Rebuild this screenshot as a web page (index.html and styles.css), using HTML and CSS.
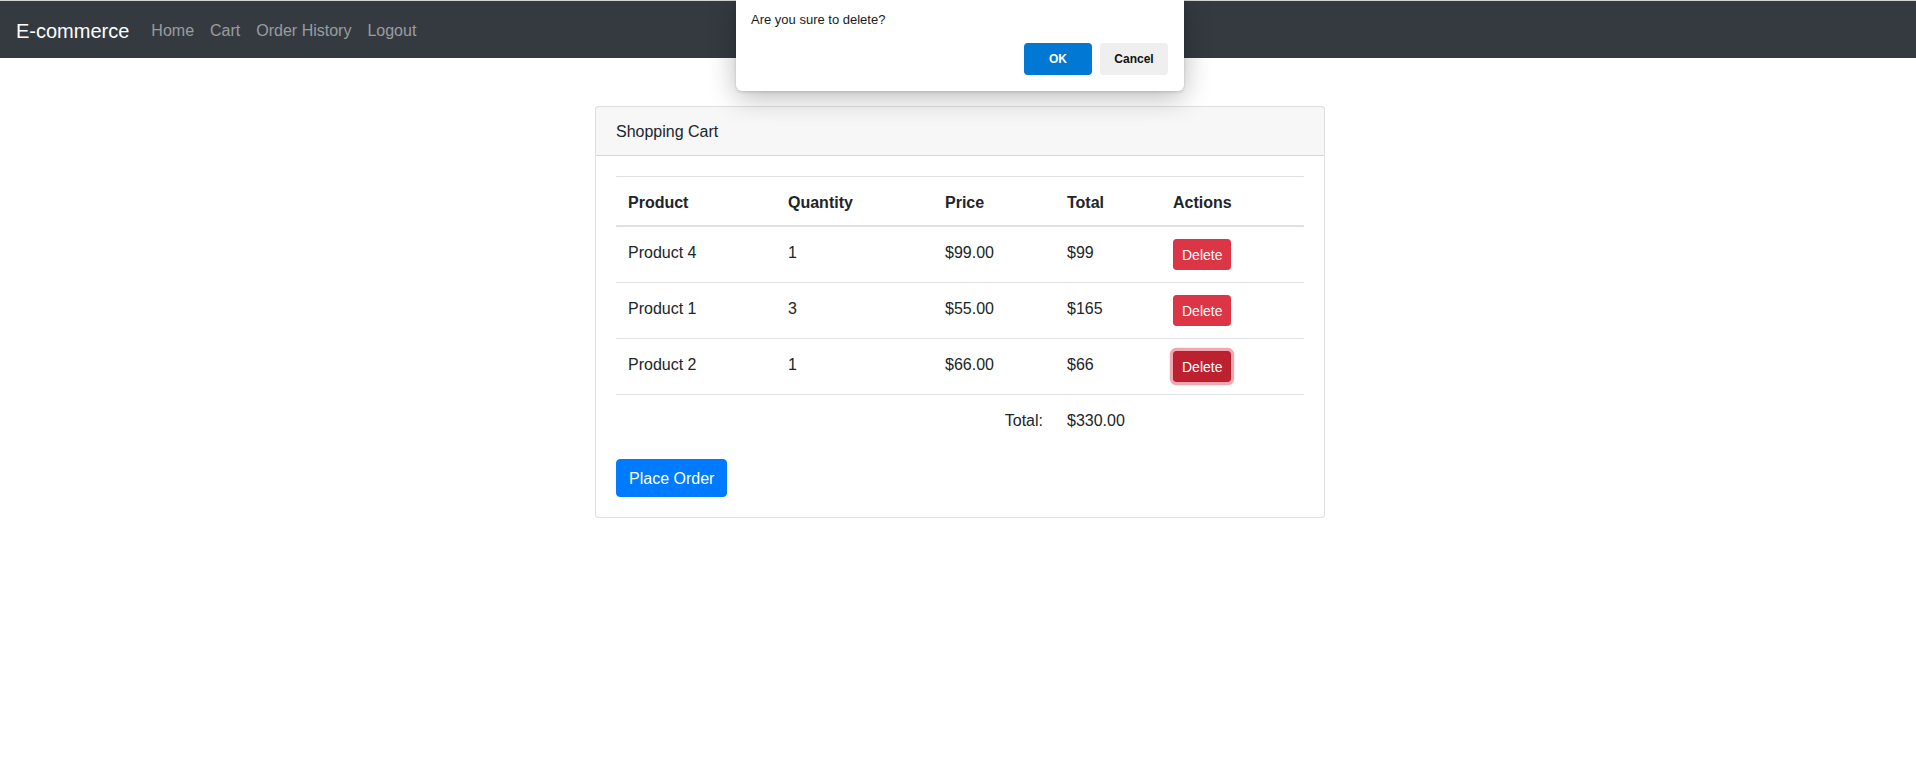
FILE: index.html
```html
<!DOCTYPE html>
<html lang="en">
<head>
<meta charset="utf-8">
<title>E-commerce</title>
<link rel="stylesheet" href="styles.css">
</head>
<body>
<div class="topline"></div>
<nav class="navbar">
  <a class="brand" href="#">E-commerce</a>
  <ul class="nav">
    <li><a href="#">Home</a></li>
    <li><a href="#">Cart</a></li>
    <li><a href="#">Order History</a></li>
    <li><a href="#">Logout</a></li>
  </ul>
</nav>

<main class="container">
  <div class="card">
    <div class="card-header">Shopping Cart</div>
    <div class="card-body">
      <table class="table">
        <colgroup>
          <col class="c1"><col class="c2"><col class="c3"><col class="c4"><col class="c5">
        </colgroup>
        <thead>
          <tr><th>Product</th><th>Quantity</th><th>Price</th><th>Total</th><th>Actions</th></tr>
        </thead>
        <tbody>
          <tr><td>Product 4</td><td>1</td><td>$99.00</td><td>$99</td><td><button class="btn-del">Delete</button></td></tr>
          <tr><td>Product 1</td><td>3</td><td>$55.00</td><td>$165</td><td><button class="btn-del">Delete</button></td></tr>
          <tr><td>Product 2</td><td>1</td><td>$66.00</td><td>$66</td><td><button class="btn-del focused">Delete</button></td></tr>
          <tr class="total-row"><td colspan="3" class="right">Total:</td><td>$330.00</td><td></td></tr>
        </tbody>
      </table>
      <button class="btn-primary">Place Order</button>
    </div>
  </div>
</main>

<div class="dialog">
  <p class="dialog-msg">Are you sure to delete?</p>
  <div class="dialog-actions">
    <button class="dbtn ok">OK</button>
    <button class="dbtn cancel">Cancel</button>
  </div>
</div>
</body>
</html>
```
FILE: styles.css
```css
* { box-sizing: border-box; }
html, body { margin: 0; padding: 0; }
body {
  font-family: "Segoe UI", "Liberation Sans", Arial, sans-serif;
  font-size: 16px;
  line-height: 1.5;
  color: #212529;
  background: #fff;
  position: relative;
  min-height: 759px;
}
.topline { height: 1px; background: #d4d4d4; }
.navbar {
  background: #343a40;
  display: flex;
  align-items: center;
  padding: 8px 16px;
  height: 56.5px;
}
.brand {
  color: #fff;
  font-size: 20px;
  line-height: 30px;
  text-decoration: none;
  margin-right: 14px;
  padding: 7px 0 3px;
}
.nav { list-style: none; margin: 0; padding: 0; display: flex; }
.nav a {
  display: block;
  padding: 10px 8px 6px;
  color: rgba(255,255,255,.5);
  text-decoration: none;
}
.container {
  width: 730px;
  margin: 48.5px 0 0 calc(50% - 363px);
}
.card {
  border: 1px solid rgba(0,0,0,.125);
  border-radius: 4px;
  background: #fff;
}
.card-header {
  background: rgba(0,0,0,.03);
  border-bottom: 1px solid rgba(0,0,0,.125);
  padding: 13px 20px 11px;
}
.card-body { padding: 20px; }
.table {
  width: 100%;
  border-collapse: collapse;
  margin-bottom: 16px;
  table-layout: fixed;
}
.c1 { width: 160px; }
.c2 { width: 157px; }
.c3 { width: 122px; }
.c4 { width: 106px; }
.c5 { width: 143px; }
.table th, .table td {
  padding: 14px 12px 10px;
  border-top: 1px solid #dee2e6;
  text-align: left;
  vertical-align: top;
}
.table td:last-child { padding-top: 12px; padding-bottom: 12px; }
.table th { font-weight: 700; }
.table thead th { border-bottom: 2px solid #dee2e6; vertical-align: bottom; }
.table td.right { text-align: right; }
.btn-del {
  font-family: inherit;
  font-size: 14px;
  line-height: 21px;
  padding: 5px 8px 3px;
  color: #fff;
  background: #dc3545;
  border: 1px solid #dc3545;
  border-radius: 3.2px;
  cursor: pointer;
}
.btn-del.focused {
  background: #bd2130;
  border-color: #b21f2d;
  box-shadow: 0 0 0 3.2px rgba(225,83,97,.5);
}
.btn-primary {
  font-family: inherit;
  font-size: 16px;
  line-height: 24px;
  padding: 7px 12px 5px;
  color: #fff;
  background: #007bff;
  border: 1px solid #007bff;
  border-radius: 4px;
  cursor: pointer;
}
.dialog {
  position: absolute;
  left: 736px;
  top: 0;
  width: 448px;
  height: 91px;
  background: #fff;
  border-radius: 0 0 6px 6px;
  box-shadow: 0 6px 28px rgba(0,0,0,.28), 0 1px 3px rgba(0,0,0,.15);
  padding: 11px 16px 0 15px;
  font-size: 13px;
}
.dialog-msg {
  margin: 0;
  line-height: 18px;
  color: #1a1a1a;
}
.dialog-actions {
  display: flex;
  justify-content: flex-end;
  gap: 8px;
  margin-top: 14px;
}
.dbtn {
  font-family: inherit;
  font-size: 12px;
  font-weight: 700;
  height: 32px;
  width: 68px;
  border: none;
  border-radius: 4px;
  cursor: pointer;
}
.dbtn.ok { background: #0078d4; color: #fff; }
.dbtn.cancel { background: #efefef; color: #111; }
```
